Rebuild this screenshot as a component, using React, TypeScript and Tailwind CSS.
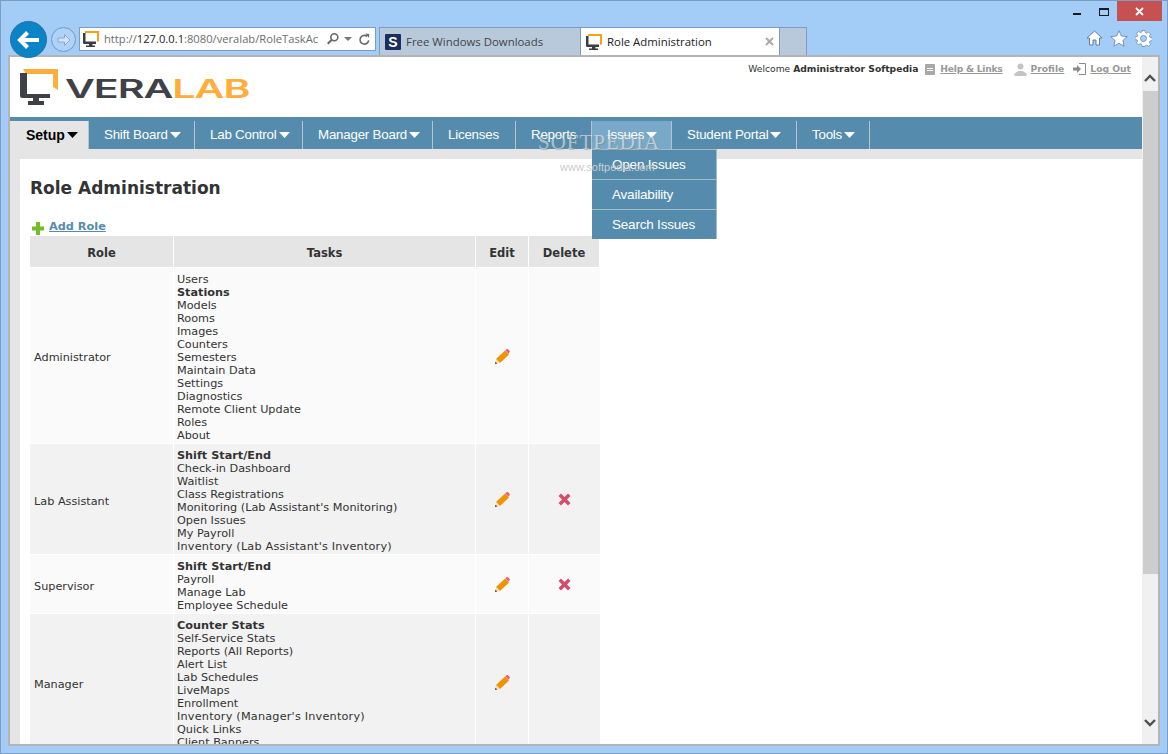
import React from "react";

const V = "font-['DejaVu_Sans','Verdana',sans-serif]";

function Fav({ s = 16 }: { s?: number }) {
  return (
    <svg width={s} height={s} viewBox="0 0 16 16" className="shrink-0">
      <path d="M2 0h14v10l-2 1V2H2z" fill="#f9a01b" />
      <path d="M0 2h2.500v8.500H13V13H9.500v1.500H12V16H3v-1.500h3V13H1.200Q0 13 0 11.800z" fill="#3b3d42" />
    </svg>
  );
}

function SFav() {
  return (
    <span className="w-4 h-4 shrink-0 bg-[#1b2f5e] rounded-[1px] flex items-center justify-center text-white font-bold text-[14px] leading-none font-['Liberation_Sans',sans-serif]">
      S
    </span>
  );
}

function Caret({ c }: { c: string }) {
  return (
    <svg width="11" height="6" viewBox="0 0 11 6" className="shrink-0 ml-[2px]">
      <path d="M0 0h11L5.500 6z" fill={c} />
    </svg>
  );
}

function NavItem({ label, cls = "", caret = true }: { label: string; cls?: string; caret?: boolean }) {
  return (
    <div className={`h-[28px] pl-[15px] flex items-center border-r border-[#b5c3cc] text-white shrink-0 ${cls}`}>
      <span className="text-[13.300px] tracking-[-0.2px]">{label}</span>
      {caret && <Caret c="#ffffff" />}
    </div>
  );
}

function Pencil() {
  return (
    <svg width="15" height="15" viewBox="0 0 15 15">
      <path d="M1 10 10 1.500 14 5.500 5 14z" fill="#f09300" />
      <path d="M10.300 1.200 11.500.2q.8-.5 1.500 0l1.500 1.500q.6.800 0 1.500L13.500 4.800z" fill="#f0597a" />
      <path d="M0 15l1-5 4 4z" fill="#f5dcb0" />
      <path d="M0 15l.5-2.200L2.200 14.500z" fill="#4a3010" />
    </svg>
  );
}

function Cross() {
  return (
    <svg width="13" height="13" viewBox="0 0 13 13">
      <path d="M3 0.500 6.500 4 10 .5 12.500 3 9 6.500 12.500 10 10 12.500 6.500 9 3 12.500.5 10 4 6.500.5 3z" fill="#d34d68" />
    </svg>
  );
}

const rows: { role: string; bg: string; tasks: string[]; edit: boolean; del: boolean }[] = [
  {
    role: "Administrator",
    bg: "bg-[#fafafa]",
    edit: true,
    del: false,
    tasks: ["Users", "*Stations", "Models", "Rooms", "Images", "Counters", "Semesters", "Maintain Data", "Settings", "Diagnostics", "Remote Client Update", "Roles", "About"],
  },
  {
    role: "Lab Assistant",
    bg: "bg-[#f2f2f2]",
    edit: true,
    del: true,
    tasks: ["*Shift Start/End", "Check-in Dashboard", "Waitlist", "Class Registrations", "Monitoring (Lab Assistant's Monitoring)", "Open Issues", "My Payroll", "Inventory (Lab Assistant's Inventory)"],
  },
  {
    role: "Supervisor",
    bg: "bg-[#fafafa]",
    edit: true,
    del: true,
    tasks: ["*Shift Start/End", "Payroll", "Manage Lab", "Employee Schedule"],
  },
  {
    role: "Manager",
    bg: "bg-[#f2f2f2]",
    edit: true,
    del: false,
    tasks: ["*Counter Stats", "Self-Service Stats", "Reports (All Reports)", "Alert List", "Lab Schedules", "LiveMaps", "Enrollment", "Inventory (Manager's Inventory)", "Quick Links", "Client Banners"],
  },
];

export default function App() {
  return (
    <div className={`w-[1168px] h-[754px] overflow-hidden bg-[#a3ccf7] border border-[#7d9cc4] flex flex-col relative`}>
      {/* caption */}
      <div className="h-[27px] shrink-0 flex justify-end items-start pr-[5px]">
        <div className="w-[8px] h-[2px] bg-[#1a1a1a] mt-[12px] mr-[18px]" />
        <div className="w-[8px] h-[5px] border border-[#1a1a1a] border-t-2 mt-[7px] mr-[8px] box-content" />
        <div className="w-[45px] h-[20px] bg-[#c75050] flex items-center justify-center">
          <svg width="9" height="9" viewBox="0 0 9 9">
            <path d="M1 1l7 7M8 1l-7 7" stroke="#fff" strokeWidth="1.800" />
          </svg>
        </div>
      </div>

      {/* toolbar */}
      <div className="h-[27px] shrink-0 flex items-start relative z-10">
        <div className="w-[37px] h-[37px] rounded-full bg-[#0a84c4] border border-[#2a6f9e] ml-[9px] -mt-[7px] flex items-center justify-center shrink-0">
          <svg width="24" height="20" viewBox="0 0 24 20">
            <path d="M10.500 2.500 3 10l7.500 7.500M4 10h18" fill="none" stroke="#fff" strokeWidth="4" />
          </svg>
        </div>
        <div className="w-[25px] h-[25px] rounded-full border border-[#6f9cc4] ml-[4px] -mt-px flex items-center justify-center shrink-0 bg-[#aed2f8]">
          <svg width="16" height="14" viewBox="0 0 16 14">
            <path d="M8.500 1.500 14 7l-5.500 5.500v-3.500H2V5h6.500z" fill="#d3e5f7" stroke="#8aa8c8" />
          </svg>
        </div>
        <div className="w-[297px] h-[24px] -mt-px ml-[3px] bg-white border border-[#7d9cc4] flex items-center pl-[3px] shrink-0">
          <Fav />
          <span className="ml-[5px] text-[11.200px] whitespace-nowrap text-[#6d6d6d] font-['Open_Sans',sans-serif] w-[218px]">
            http://<span className="text-[#222]">127.0.0.1</span>:8080/veralab/RoleTaskAc
          </span>
          <svg width="14" height="14" viewBox="0 0 16 16" className="ml-[4px] shrink-0">
            <circle cx="9.500" cy="6" r="4" fill="none" stroke="#666" strokeWidth="1.800" />
            <path d="M6.500 9 2 13.500" stroke="#666" strokeWidth="2.400" />
          </svg>
          <svg width="8" height="5" viewBox="0 0 8 5" className="ml-[4px] shrink-0">
            <path d="M0 0h8L4 4z" fill="#777" />
          </svg>
          <svg width="13" height="13" viewBox="0 0 14 14" className="ml-[6px] shrink-0">
            <path d="M11.500 8a4.700 4.700 0 1 1-1.600-4.300" fill="none" stroke="#666" strokeWidth="1.700" />
            <path d="M8 .5 12 1v4.500z" fill="#666" />
          </svg>
        </div>
        <div className="ml-[3px] -mt-px h-[28px] flex border border-[#7d9cc4] border-b-0 bg-[#b9c9dc] text-[11.400px] font-['Open_Sans',sans-serif] shrink-0">
          <div className="w-[200px] flex items-center pl-[5px] text-[#444]">
            <SFav />
            <span className="ml-[5px]">Free Windows Downloads</span>
          </div>
          <div className="w-[200px] flex items-center pl-[5px] bg-white text-[#222] border-l border-r border-[#7d9cc4]">
            <Fav />
            <span className="ml-[5px] flex-1">Role Administration</span>
            <svg width="9" height="9" viewBox="0 0 9 9" className="mr-[5px]">
              <path d="M1 1l7 7M8 1l-7 7" stroke="#aaa" strokeWidth="2" />
            </svg>
          </div>
          <div className="w-[26px]" />
        </div>
        <div className="flex-1 flex justify-end items-center gap-[7px] pr-[15px] -mt-[3px] h-[26px]">
          <svg width="17" height="16" viewBox="0 0 17 16">
            <path d="M8.500 1 1 8h2.500v7h3.500v-5h3v5h3.500V8H16z" fill="#fff" stroke="#5f7f9f" />
          </svg>
          <svg width="18" height="17" viewBox="0 0 18 17">
            <path d="M9 0.800l2.400 5.200 5.800.6-4.300 3.900 1.200 5.700L9 13.300l-5.100 2.900 1.200-5.700L.8 6.600l5.800-.6z" fill="#fff" stroke="#5f7f9f" strokeWidth="0.800" />
          </svg>
          <svg width="17" height="17" viewBox="0 0 17 17">
            <path d="M7 .5h3l.4 2.200 1.300.6 1.900-1.200 2 2-1.200 1.900.6 1.300 2.200.4v3l-2.200.4-.6 1.300 1.200 1.900-2 2-1.900-1.200-1.300.6L10 16.500H7l-.4-2.200-1.300-.6-1.900 1.200-2-2 1.200-1.900-.6-1.300L0 10V7l2.200-.4.6-1.300L1.600 3.400l2-2 1.900 1.200 1.300-.6z" fill="#fff" stroke="#5f7f9f" strokeWidth="0.700" />
            <circle cx="8.500" cy="8.500" r="3" fill="#a3ccf7" stroke="#5f7f9f" strokeWidth="0.700" />
          </svg>
        </div>
      </div>

      {/* page frame */}
      <div className="h-[691px] shrink-0 ml-[7px] mr-[7px] border-2 border-[#b4b4b4] bg-white flex overflow-hidden relative">
        <div className="w-[1132px] shrink-0 flex flex-col overflow-hidden">
          {/* header */}
          <div className="h-[60px] shrink-0 flex justify-between bg-white">
            <div className="flex items-start pl-[10px] pt-[12px]">
              <svg width="38" height="36" viewBox="0 0 38 36" className="shrink-0">
                <path d="M3 0h35v21l-5-3V5H6z" fill="#ffae3b" />
                <path d="M0 4h7l0 21h23v4H19v3h5v4H8v-4h5v-3H2.500Q0 29 0 26.500z" fill="#3f4147" />
              </svg>
              <span className="ml-[7px] mt-[3px] text-[26px] leading-[34px] font-semibold font-['Inter',sans-serif] tracking-tight inline-block origin-left scale-x-[1.58] whitespace-nowrap text-[#3f4147]">
                VERA<span className="text-[#ffae3b]">LAB</span>
              </span>
            </div>
            <div className={`${V} text-[9.200px] flex items-center h-[24px] pr-[11px] whitespace-nowrap`}>
              <span className="text-[#333]">
                Welcome <b>Administrator Softpedia</b>
              </span>
              <span className="w-[10px] h-[11px] ml-[7px] bg-[#a8a8a8] rounded-[1px] flex flex-col gap-px items-center justify-center">
                <span className="w-[6px] h-px bg-white" />
                <span className="w-[6px] h-px bg-white" />
              </span>
              <span className="ml-[5px] font-bold underline text-[#999] tracking-[-0.25px]">Help &amp; Links</span>
              <svg width="13" height="13" viewBox="0 0 13 13" className="ml-[11px]">
                <circle cx="6.500" cy="3.500" r="3" fill="#c4c4c4" />
                <path d="M0.500 13v-2.500L4.500 8h4l4 2.500V13z" fill="#c4c4c4" />
              </svg>
              <span className="ml-[4px] font-bold underline text-[#999]">Profile</span>
              <svg width="13" height="12" viewBox="0 0 13 12" className="ml-[9px]">
                <path d="M0 4.500h4V2l4 4-4 4V7.500H0z" fill="#888" />
                <path d="M6 .5h6.500v11H6" fill="none" stroke="#888" />
              </svg>
              <span className="ml-[4px] font-bold underline text-[#999]">Log Out</span>
            </div>
          </div>

          {/* nav */}
          <div className="h-[32px] shrink-0 bg-[#558cad] pt-[4px] flex font-['Liberation_Sans','Arial',sans-serif]">
            <div className="h-[28px] w-[79px] pl-[16px] flex items-center bg-[#e5e5e5] border-r border-[#b5c3cc] text-black shrink-0">
              <span className="text-[14px] font-semibold">Setup</span>
              <Caret c="#000000" />
            </div>
            <NavItem label="Shift Board" cls="w-[106px]" />
            <NavItem label="Lab Control" cls="w-[108px]" />
            <NavItem label="Manager Board" cls="w-[130px]" />
            <NavItem label="Licenses" cls="w-[83px]" caret={false} />
            <NavItem label="Reports" cls="w-[76px]" caret={false} />
            <NavItem label="Issues" cls="w-[80px] bg-[#78a9c8]" />
            <NavItem label="Student Portal" cls="w-[125px]" />
            <NavItem label="Tools" cls="w-[73px]" />
          </div>

          {/* content */}
          <div className="flex-1 min-h-0 bg-[#e5e5e5] pt-[10px] pl-[10px] flex flex-col">
            <div className={`flex-1 min-h-0 bg-white pl-[10px] overflow-hidden ${V} text-[#333]`}>
              <h1 className="text-[17px] font-bold leading-[22px] mt-[18px] text-[#333]">Role Administration</h1>
              <div className="mt-[17px] h-[20px] flex items-center pl-[2px] pt-[2px]">
                <svg width="12" height="13" viewBox="0 0 12 13" className="mt-[2px]">
                  <path d="M4 0h4v4.500h4v4H8V13H4V8.500H0v-4h4z" fill="#73bd2a" />
                </svg>
                <span className="ml-[5px] text-[11.300px] font-bold underline text-[#558cad]">Add Role</span>
              </div>
              <table className="w-[570px] table-fixed border-separate border-spacing-0 text-[11.250px] leading-[13px]">
                <colgroup>
                  <col className="w-[144px]" />
                  <col className="w-[302px]" />
                  <col className="w-[53px]" />
                  <col className="w-[71px]" />
                </colgroup>
                <thead>
                  <tr>
                    {["Role", "Tasks", "Edit", "Delete"].map((h) => (
                      <th key={h} className="h-[32px] pt-[3px] bg-[#e5e5e5] border-r border-b border-white font-bold text-center text-[11.500px] text-[#333] px-0 pb-0">
                        {h}
                      </th>
                    ))}
                  </tr>
                </thead>
                <tbody>
                  {rows.map((r) => (
                    <tr key={r.role}>
                      <td className={`${r.bg} border-r border-b border-white pl-[4px] pt-[4px]`}>{r.role}</td>
                      <td className={`${r.bg} border-r border-b border-white pl-[3px] pt-[5px] pb-px`}>
                        {r.tasks.map((t) =>
                          t[0] === "*" ? (
                            <div key={t} className="font-bold">
                              {t.slice(1)}
                            </div>
                          ) : t.startsWith("Inventory") ? (
                            <div key={t} className="tracking-[0.2px]">
                              {t}
                            </div>
                          ) : (
                            <div key={t}>{t}</div>
                          )
                        )}
                      </td>
                      <td className={`${r.bg} border-r border-b border-white pt-[1px]`}>
                        <div className="flex justify-center">{r.edit && <Pencil />}</div>
                      </td>
                      <td className={`${r.bg} border-b border-white`}>
                        <div className="flex justify-center">{r.del && <Cross />}</div>
                      </td>
                    </tr>
                  ))}
                </tbody>
              </table>
            </div>
          </div>
        </div>

        {/* scrollbar */}
        <div className="w-[16px] shrink-0 bg-[#f0f0f0] flex flex-col items-center">
          <div className="h-[34px] flex items-center justify-center pt-[8px]">
            <svg width="12" height="8" viewBox="0 0 12 8">
              <path d="M1 7l5-5 5 5" fill="none" stroke="#505050" strokeWidth="2.400" />
            </svg>
          </div>
          <div className="w-[15px] h-[483px] bg-[#cdcdcd]" />
          <div className="flex-1 flex items-end justify-center pb-[17px]">
            <svg width="12" height="8" viewBox="0 0 12 8">
              <path d="M1 1l5 5 5-5" fill="none" stroke="#505050" strokeWidth="2.400" />
            </svg>
          </div>
        </div>

        {/* dropdown menu */}
        <div className="absolute left-[582px] top-[92px] w-[125px] bg-[#558cad] text-white font-['Liberation_Sans','Arial',sans-serif] text-[13.500px] tracking-[-0.2px] border-r border-[#a9b9c4] border-t border-t-[#a9b9c4]">
          {["Open Issues", "Availability", "Search Issues"].map((t, i) => (
            <div key={t} className={`pl-[20px] pt-[2px] flex items-center ${i < 2 ? "h-[30px] border-b border-[#a9bcc9]" : "h-[29px]"}`}>
              {t}
            </div>
          ))}
        </div>

        {/* watermark */}
        <div className="absolute left-[528px] top-[73px] text-[21px] tracking-[1px] leading-[24px] font-['Liberation_Serif',serif] text-white/50 [text-shadow:1px_1px_1px_rgba(120,120,120,0.45)] pointer-events-none whitespace-nowrap">
          SOFTPEDIA
        </div>
        <div className="absolute left-[550px] top-[103px] text-[11px] leading-[14px] font-['Liberation_Sans',sans-serif] text-[#ccc] pointer-events-none whitespace-nowrap">
          www.softpedia.com
        </div>
      </div>
    </div>
  );
}
